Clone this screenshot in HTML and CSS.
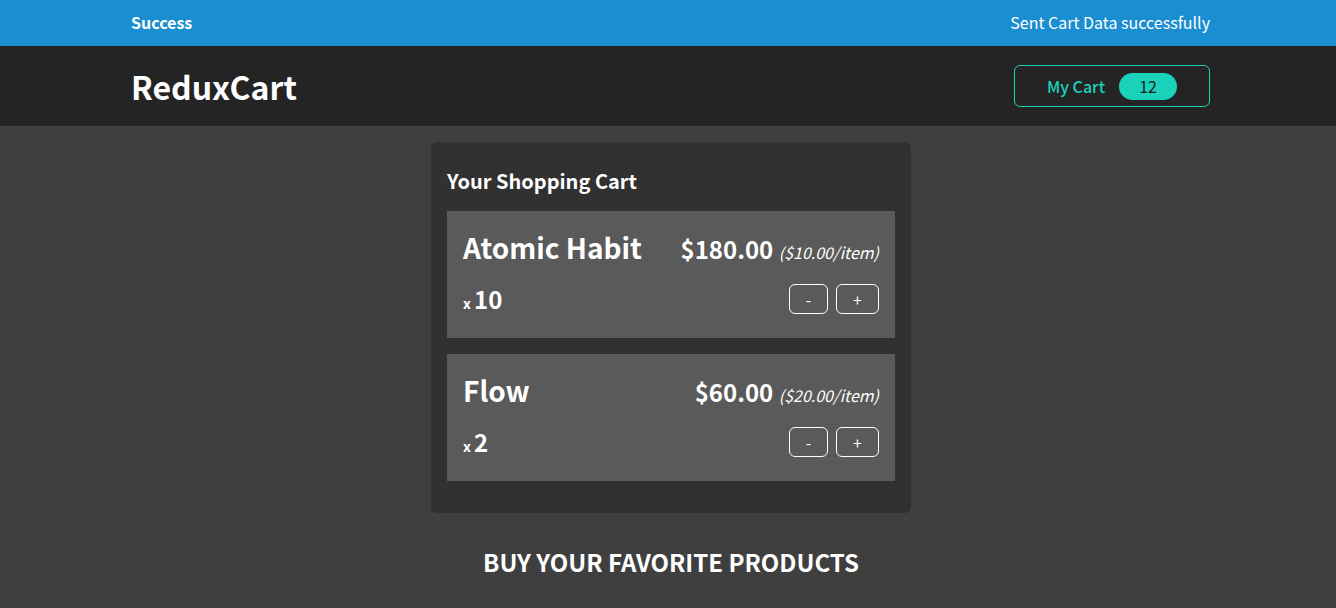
FILE: index.html
```html
<!DOCTYPE html>
<html>
<head>
<meta charset="utf-8">
<link rel="stylesheet" href="styles.css">
</head>
<body>
<div class="notification">
  <h2>Success</h2>
  <p>Sent Cart Data successfully</p>
</div>
<header class="header">
  <h1>ReduxCart</h1>
  <button class="cart-button"><span>My Cart</span><span class="badge">12</span></button>
</header>
<main class="main">
  <section class="cart">
    <h2>Your Shopping Cart</h2>
    <ul class="items">
      <li class="item">
        <div class="item-top">
          <h3>Atomic Habit</h3>
          <div class="price">$180.00 <span class="unit">($10.00/item)</span></div>
        </div>
        <div class="item-bottom">
          <div class="qty">x <span>10</span></div>
          <div class="actions"><button class="minus">-</button><button class="plus">+</button></div>
        </div>
      </li>
      <li class="item">
        <div class="item-top">
          <h3>Flow</h3>
          <div class="price">$60.00 <span class="unit">($20.00/item)</span></div>
        </div>
        <div class="item-bottom">
          <div class="qty">x <span>2</span></div>
          <div class="actions"><button class="minus">-</button><button class="plus">+</button></div>
        </div>
      </li>
    </ul>
  </section>
  <h2 class="products-title">BUY YOUR FAVORITE PRODUCTS</h2>
</main>
</body>
</html>
```
FILE: styles.css
```css
* { box-sizing: border-box; }
html { font-family: "Noto Sans CJK JP", "Noto Sans", sans-serif; }
body { margin: 0; background: #3f3f3f; color: #fff; }

.notification {
  height: 46px;
  background: #1a8ed1;
  display: flex;
  justify-content: space-between;
  align-items: center;
  padding: 0 126px 2px 131px;
}
.notification h2 { margin: 0; font-size: 16px; font-weight: 700; }
.notification p { margin: 0; font-size: 16px; font-weight: 400; }

.header {
  height: 80px;
  background: #252424;
  display: flex;
  justify-content: space-between;
  align-items: center;
  padding: 0 126px 0 131px;
}
.header h1 { margin: 0; font-size: 32px; font-weight: 700; }

.cart-button {
  display: flex;
  align-items: center;
  height: 42px;
  width: 196px;
  padding: 0 0 0 32px;
  background: transparent;
  border: 1px solid #1ad1b9;
  border-radius: 6px;
  color: #1ad1b9;
  font-family: inherit;
  font-size: 16px;
  font-weight: 500;
}
.badge {
  margin-left: 14px;
  width: 58px;
  height: 27px;
  border-radius: 30px;
  background: #1ad1b9;
  color: #1d1d1d;
  font-weight: 400;
  display: flex;
  align-items: center;
  justify-content: center;
}

.main { padding: 16px 0 0 6px; }

.cart {
  width: 480px;
  margin: 0 auto;
  background: #313131;
  border-radius: 6px;
  padding: 16px 16px 32px;
}
.cart > h2 { margin: 9px 0 16px; font-size: 20px; font-weight: 700; line-height: 28px; }
.items { list-style: none; margin: 0; padding: 0; display: flex; flex-direction: column; gap: 16px; }
.item { background: #5a5a5a; padding: 16px; height: 127px; }
.item-top { display: flex; justify-content: space-between; align-items: baseline; }
.item-top h3 { margin: 0; font-size: 28px; font-weight: 700; }
.price { font-size: 24px; font-weight: 700; }
.unit { font-size: 16px; font-weight: 400; font-style: italic; }
.item-bottom { display: flex; justify-content: space-between; align-items: center; margin-top: 14px; }
.qty { font-size: 14px; font-weight: 700; }
.qty span { font-size: 24px; font-weight: 700; }
.actions { display: flex; gap: 8px; }
.actions button {
  height: 30px;
  background: transparent;
  border: 1px solid #fff;
  border-radius: 6px;
  color: #fff;
  font-family: inherit;
  font-size: 16px;
}
.minus { width: 39px; }
.plus { width: 43px; }

.products-title {
  margin: 31px 0 0;
  text-align: center;
  font-size: 24px;
  font-weight: 700;
}
```
